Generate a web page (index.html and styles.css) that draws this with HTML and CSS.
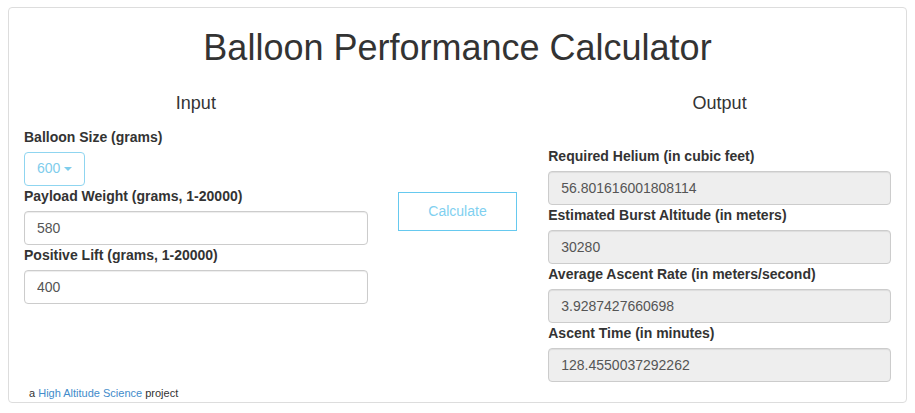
FILE: index.html
```html
<!DOCTYPE html>
<html>
<head>
<meta charset="utf-8">
<title>Balloon Performance Calculator</title>
<link rel="stylesheet" href="styles.css">
</head>
<body>
<div class="panel">
  <h1 class="title">Balloon Performance Calculator</h1>
  <div class="row">
    <div class="col col-input">
      <h4 class="col-head">Input</h4>
      <div class="group">
        <label class="lbl">Balloon Size (grams)</label>
        <button class="dropdown" type="button">600<span class="caret"></span></button>
      </div>
      <div class="group">
        <label class="lbl">Payload Weight (grams, 1-20000)</label>
        <input class="field" type="text" value="580">
      </div>
      <div class="group">
        <label class="lbl">Positive Lift (grams, 1-20000)</label>
        <input class="field" type="text" value="400">
      </div>
      <p class="credit">a <a href="#">High Altitude Science</a> project</p>
    </div>
    <div class="col col-mid">
      <button class="calc" type="button">Calculate</button>
    </div>
    <div class="col col-output">
      <h4 class="col-head">Output</h4>
      <div class="out-fields">
        <div class="group">
          <label class="lbl">Required Helium (in cubic feet)</label>
          <input class="field readonly" type="text" value="56.801616001808114" readonly>
        </div>
        <div class="group">
          <label class="lbl">Estimated Burst Altitude (in meters)</label>
          <input class="field readonly" type="text" value="30280" readonly>
        </div>
        <div class="group">
          <label class="lbl">Average Ascent Rate (in meters/second)</label>
          <input class="field readonly" type="text" value="3.9287427660698" readonly>
        </div>
        <div class="group">
          <label class="lbl">Ascent Time (in minutes)</label>
          <input class="field readonly" type="text" value="128.4550037292262" readonly>
        </div>
      </div>
    </div>
  </div>
</div>
</body>
</html>
```

FILE: styles.css
```css
* { box-sizing: border-box; }

body {
  margin: 0;
  background: #fff;
  color: #333;
  font-family: "Liberation Sans", Arial, Helvetica, sans-serif;
  font-size: 14px;
  line-height: 1.42857;
}

.panel {
  margin: 7px 8px 0 8px;
  border: 1px solid #ddd;
  border-radius: 4px;
  background: #fff;
}

.title {
  margin: 20px 0 10px;
  font-size: 36px;
  font-weight: 400;
  line-height: 1.1;
  text-align: center;
  color: #333;
}

.row {
  display: grid;
  grid-template-columns: 5fr 2fr 5fr;
}

.col {
  padding: 0 15px;
  min-width: 0;
}

.col-input {
  display: flex;
  flex-direction: column;
}

.col-output {
  padding-left: 16px;
  padding-bottom: 20px;
}

.col-head {
  margin: 16px 0 13.5px;
  font-size: 18px;
  font-weight: 400;
  line-height: 1.1;
  text-align: center;
  color: #333;
}

.out-fields {
  padding-top: 19.5px;
}

.group {
  display: flex;
  flex-direction: column;
  align-items: flex-start;
}

.lbl {
  display: block;
  margin-bottom: 5px;
  font-weight: 700;
  font-size: 14px;
  line-height: 20px;
  color: #333;
}

.field {
  display: block;
  width: 100%;
  height: 34px;
  padding: 6px 12px;
  font-family: inherit;
  font-size: 14px;
  line-height: 1.42857;
  color: #555;
  background: #fff;
  border: 1px solid #ccc;
  border-radius: 4px;
  box-shadow: inset 0 1px 1px rgba(0,0,0,.075);
}

.field.readonly {
  background: #eee;
}

.dropdown {
  display: inline-flex;
  align-items: center;
  height: 34px;
  padding: 6px 12px;
  font-family: inherit;
  font-size: 14px;
  line-height: 1.42857;
  color: #7fcdec;
  background: #fff;
  border: 1px solid #8fd5f0;
  border-radius: 4px;
}

.caret {
  display: inline-block;
  width: 0;
  height: 0;
  margin-left: 4px;
  border-top: 4px solid #7fcdec;
  border-left: 4px solid transparent;
  border-right: 4px solid transparent;
}

.col-mid {
  display: flex;
  flex-direction: column;
  align-items: stretch;
}

.calc {
  margin-top: 114.4px;
  height: 39px;
  padding: 9px 12px;
  font-family: inherit;
  font-size: 14px;
  line-height: 1.42857;
  color: #7fd0f0;
  background: #fff;
  border: 1px solid #66c9ef;
  border-radius: 0;
}

.credit {
  margin: auto 0 1px 0;
  padding-left: 5px;
  font-size: 11px;
  line-height: 1.42857;
  color: #333;
}

.credit a {
  color: #428bca;
  text-decoration: none;
}
```
